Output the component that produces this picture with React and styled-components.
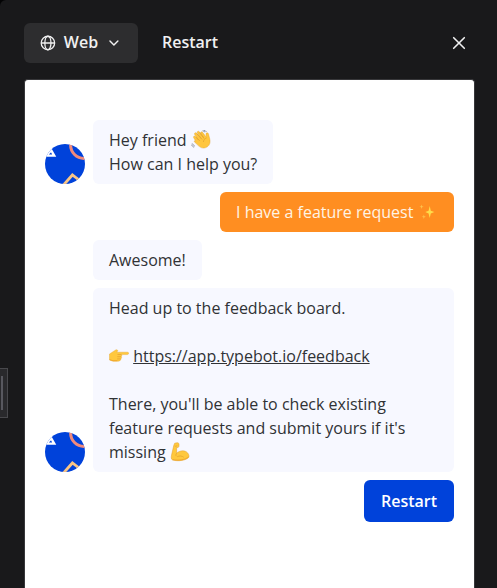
import React from 'react';
import styled, { createGlobalStyle } from 'styled-components';

const GlobalStyle = createGlobalStyle`
  * { box-sizing: border-box; }
  html, body { margin: 0; background: #030304; overflow: hidden; }
  button { border: 0; margin: 0; padding: 0; cursor: pointer; }
`;

const Drawer = styled.main`
  position: relative;
  display: flex;
  flex-direction: column;
  height: 588px;
  padding: 23px 22px 0 24px;
  gap: 16px;
  overflow: hidden;
  background: #19191b;
  border-top-left-radius: 6px;
  color: #f0f0f1;
  font-family: 'Open Sans', sans-serif;
  font-size: 16px;
  line-height: 24px;
`;

const Toolbar = styled.header`
  display: flex;
  align-items: center;
  height: 40px;
  flex: none;
`;

const ToolbarButton = styled.button`
  display: flex;
  align-items: center;
  height: 40px;
  padding: 0 ${({ $wide }) => ($wide ? '24px' : '16px')};
  border-radius: 6px;
  background: ${({ $filled }) => ($filled ? '#2d2d2f' : 'transparent')};
  color: inherit;
  font: 600 16px/24px 'Open Sans', sans-serif;
`;

const Label = styled.span`
  padding-bottom: 2px;
`;

const SelectButton = styled(ToolbarButton)`
  width: 114px;
  gap: 8px;
`;

const CloseButton = styled(ToolbarButton)`
  margin-left: auto;
  padding: 0 8px;
`;

const Preview = styled.section`
  flex: 1;
  display: flex;
  flex-direction: column;
  gap: 8px;
  padding: 40px 20px;
  background: #fff;
  border: 1px solid #37373a;
  border-bottom: 0;
  border-radius: 4px 4px 0 0;
  color: #303235;
`;

const BotGroup = styled.div`
  display: flex;
  align-items: flex-end;
  gap: 8px;
`;

const Messages = styled.div`
  flex: 1;
  display: flex;
  flex-direction: column;
  align-items: flex-start;
  gap: 8px;
`;

const Bubble = styled.div`
  padding: 8px 16px;
  border-radius: 6px;
  background: #f7f8ff;
  white-space: pre-wrap;
`;

const GuestBubble = styled(Bubble)`
  align-self: flex-end;
  width: 234px;
  background: #ff8e21;
  color: #fff4e4;
  white-space: nowrap;
`;

const FeedbackLink = styled.a`
  color: inherit;
  text-decoration: underline;
`;

const RestartButton = styled.button`
  align-self: flex-end;
  width: 90px;
  height: 42px;
  border-radius: 6px;
  background: #0042da;
  color: #fff;
  font: 600 16px/24px 'Open Sans', sans-serif;
`;

const AvatarSvg = styled.svg`
  display: block;
  flex: none;
  width: 40px;
  height: 40px;
  border-radius: 50%;
`;

const EmojiSvg = styled.svg`
  display: inline-block;
  width: 20px;
  height: 20px;
  vertical-align: -4px;
`;

const ResizeHandle = styled.div`
  position: absolute;
  left: 0;
  top: 368px;
  display: flex;
  align-items: center;
  width: 8px;
  height: 50px;
  border: 1px solid #48484c;
  border-left: 0;
  background: #29292c;
`;

const Grip = styled.span`
  width: 2px;
  height: 34px;
  margin-left: 1px;
  background: #58585f;
`;

const GlobeIcon = () => (
  <svg width="16" height="16" viewBox="0 0 16 16" fill="none" stroke="currentColor" strokeWidth="1.3">
    <circle cx="8" cy="8" r="6.8" />
    <ellipse cx="8" cy="8" rx="3.1" ry="6.8" />
    <path d="M1.2 8h13.6" />
  </svg>
);

const ChevronIcon = () => (
  <svg width="16" height="16" viewBox="0 0 24 24" fill="none" stroke="currentColor" strokeWidth="2.2" strokeLinecap="round" strokeLinejoin="round">
    <path d="m6 9 6 6 6-6" />
  </svg>
);

const CloseIcon = () => (
  <svg width="16" height="16" viewBox="0 0 16 16" fill="none" stroke="currentColor" strokeWidth="1.6" strokeLinecap="round">
    <path d="m2.7 2.7 10.6 10.6M13.3 2.7 2.7 13.3" />
  </svg>
);

const Avatar = () => (
  <AvatarSvg viewBox="0 0 40 40" role="img" aria-label="Bot avatar">
    <rect width="40" height="40" fill="#0042da" />
    <path d="M1 11.600 6.300 6.500 9.200 11.600Z" fill="none" stroke="#fff" strokeWidth="2.400" />
    <circle cx="39" cy="1" r="13.400" fill="none" stroke="#f08a7c" strokeWidth="3" />
    <path d="m18.500 41 8.900-10L36 37.500" fill="none" stroke="#f8c587" strokeWidth="2.800" />
  </AvatarSvg>
);

const WaveEmoji = () => (
  <EmojiSvg viewBox="0 0 20 20" role="img" aria-label="Waving hand">
    <path d="M4.800 11.200 2.700 7.800C1.900 6.400 3.700 5.300 4.700 6.700L7.500 10 3.700 4.500C2.800 3.100 4.700 1.900 5.700 3.200L10 8.300 6.400 3C5.500 1.600 7.500.500 8.500 1.900L12.500 7.500 9.900 3.500C9 2.100 10.800 1.100 11.800 2.500L15.300 7.200 15 4.200C14.900 2.500 17 2.200 17.500 3.900L18.800 9.100C20 14 17.300 17.300 13.300 18 9.600 18.500 7.500 15.800 4.100 12.600 2.500 11 3.500 9.900 4.800 11.200Z" fill="#ffc63e" stroke="#de9e2c" strokeWidth=".4" />
    <path d="m4.800 7 4 4M5.900 3.800l5.200 5.700M8.700 2.700l4.500 6M12.400 12c.2-2 1.300-3.400 3.100-4" fill="none" stroke="#df9f31" strokeWidth=".7" />
    <path d="M11.500.800c1.200.100 2 .600 2.600 1.500M12.500.100c1.400.2 2.400.9 3 1.900M1.200 13.400c.7 1.400 1.500 2.200 2.700 2.800M.300 14.600c.8 1.400 1.600 2.200 2.800 2.800" fill="none" stroke="#7b8291" strokeWidth=".8" />
  </EmojiSvg>
);

const SparklesEmoji = () => (
  <EmojiSvg viewBox="0 0 20 20" role="img" aria-label="Sparkles">
    <path d="M11.700 4 12.800 8.700 16.300 10 12.800 11.400 11.700 16 10.600 11.400 7.300 10 10.600 8.700Z" fill="#ffdc4b" />
    <path d="m3.500 2.500.6 1.700 1.600.5-1.600.6-.6 1.700-.5-1.700-1.600-.6L3 4.200ZM5.800 12.500l.6 1.700 1.500.5-1.500.6-.6 1.700-.5-1.700-1.600-.6 1.600-.5Z" fill="#ffc14a" />
  </EmojiSvg>
);

const PointEmoji = () => (
  <EmojiSvg viewBox="0 0 20 20" role="img" aria-label="Pointing right">
    <path d="M.5 8 6.300 4.200C8.200 3.200 9.500 4.500 8.200 5.600L7.700 6.200H18.400C20.100 6.200 20.100 8.500 18.400 8.600H12C13.200 9 13 10.400 12.100 10.700 13 11.200 12.600 12.600 11.800 12.800 12.100 14.400 10.600 15.200 8.200 15.200H4L.5 14Z" fill="#ffc83d" stroke="#e6a52e" strokeWidth=".4" />
    <path d="M8.500 8.500h3.900M8.300 10.700h3.700M8.100 12.900h3.500" fill="none" stroke="#df982b" strokeWidth=".6" />
    <path d="M.8 13.700 4 14.700h4.300" fill="none" stroke="#efa52e" strokeWidth=".9" />
  </EmojiSvg>
);

const MuscleEmoji = () => (
  <EmojiSvg viewBox="0 0 20 20" role="img" aria-label="Flexed biceps">
    <path d="M4.700 1.200 7.200.7C8.600.6 9.200 1.600 9 3.300L8.800 4.800C8.200 6 7.100 5.600 6.600 4.900L6.700 11.200C9 8.900 13.300 8 16.200 9.700 18.400 11.200 19.200 13 18.900 15.200 16.300 18.400 8.200 19.600 2.500 18 1 17.300 1.200 14.800 1.500 13.300L3.800 3.300Z" fill="#ffc83d" stroke="#df9c2c" strokeWidth=".5" />
    <path d="M4.700 4c.9.400 1.600.3 2.200-.5M6.700 11.200c-.8 1-1 2.100-.5 3M7.200 14.700c2.300-1.300 5-.7 6.600.6" fill="none" stroke="#e1a12f" strokeWidth=".7" />
    <path d="M2.700 17.500c5.100 1.300 12.500.5 15.700-2.500" fill="none" stroke="#efa52e" strokeWidth=".9" />
  </EmojiSvg>
);

export default function App() {
  return (
    <>
      <GlobalStyle />
      <Drawer>
        <Toolbar>
          <SelectButton $filled>
            <GlobeIcon />
            <Label>Web</Label>
            <ChevronIcon />
          </SelectButton>
          <ToolbarButton $wide><Label>Restart</Label></ToolbarButton>
          <CloseButton aria-label="Close"><CloseIcon /></CloseButton>
        </Toolbar>
        <Preview>
          <BotGroup>
            <Avatar />
            <Messages>
              <Bubble>Hey friend <WaveEmoji />{'\n'}How can I help you?</Bubble>
            </Messages>
          </BotGroup>
          <GuestBubble>I have a feature request <SparklesEmoji /></GuestBubble>
          <BotGroup>
            <Avatar />
            <Messages>
              <Bubble>Awesome!</Bubble>
              <Bubble>
                Head up to the feedback board.{'\n\n'}
                <PointEmoji />{' '}
                <FeedbackLink href="#">https://app.typebot.io/feedback</FeedbackLink>
                {"\n\nThere, you'll be able to check existing feature requests and submit yours if it's missing "}
                <MuscleEmoji />
              </Bubble>
            </Messages>
          </BotGroup>
          <RestartButton>Restart</RestartButton>
        </Preview>
        <ResizeHandle><Grip /></ResizeHandle>
      </Drawer>
    </>
  );
}
